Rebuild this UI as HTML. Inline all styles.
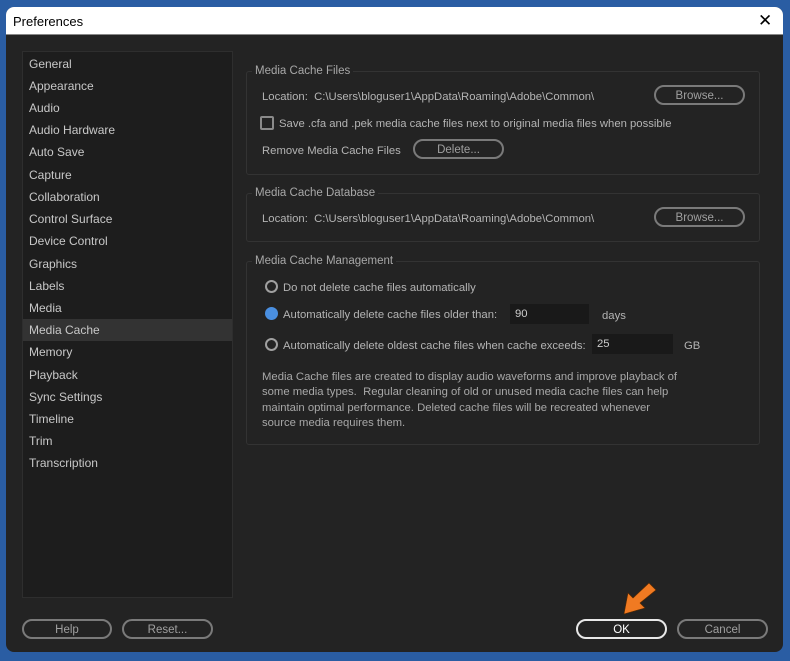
<!DOCTYPE html>
<html><head><meta charset="utf-8"><style>
*{margin:0;padding:0;box-sizing:border-box}
body{width:790px;height:661px;background:#2a5da3;position:relative;overflow:hidden;font-family:"Liberation Sans",sans-serif;font-size:11.3px;color:#b4b4b4}
.a{position:absolute;white-space:nowrap}
.t{margin-top:1.5px}
#win{position:absolute;left:6px;top:7px;width:777px;height:645px;background:#232323;border-radius:8px;overflow:hidden}
#title{position:absolute;left:0;top:0;width:777px;height:28px;background:#fff;border-bottom:1px solid #888;color:#000;font-size:13px;padding:7px 0 0 7px}
#side{position:absolute;left:22px;top:51px;width:211px;height:547px;background:#1d1d1d;border:1px solid #2e2e2e}
.it{position:absolute;left:6px;font-size:12px;color:#c8c8c8}
.sel{position:absolute;left:0;top:267px;width:209px;height:22px;background:#333}
.grp{position:absolute;border:1px solid #333;border-radius:3px}
.gt{position:absolute;background:#232323;padding:0 3px;color:#a8a8a8;font-size:11.5px;margin-top:1px}
.btn{position:absolute;border:2px solid #7a7a7a;border-radius:10px;text-align:center;color:#a0a0a0;font-size:11.5px;line-height:18px}
.inp{position:absolute;background:#191919;color:#ccc;padding-left:5px;line-height:20px;height:20px}
.rad{position:absolute;width:13px;height:13px;border:2px solid #a0a0a0;border-radius:50%}
</style></head><body>
<div id="win">
<div id="title">Preferences</div>
<div class="a" style="left:752px;top:4px;color:#000;font-size:17px">✕</div>
</div>
<div id="side">
<div class="sel"></div>
<div class="it" style="top:5px">General</div>
<div class="it" style="top:27px">Appearance</div>
<div class="it" style="top:49px">Audio</div>
<div class="it" style="top:71px">Audio Hardware</div>
<div class="it" style="top:93px">Auto Save</div>
<div class="it" style="top:116px">Capture</div>
<div class="it" style="top:138px">Collaboration</div>
<div class="it" style="top:160px">Control Surface</div>
<div class="it" style="top:182px">Device Control</div>
<div class="it" style="top:205px">Graphics</div>
<div class="it" style="top:227px">Labels</div>
<div class="it" style="top:249px">Media</div>
<div class="it" style="top:271px">Media Cache</div>
<div class="it" style="top:293px">Memory</div>
<div class="it" style="top:316px">Playback</div>
<div class="it" style="top:338px">Sync Settings</div>
<div class="it" style="top:360px">Timeline</div>
<div class="it" style="top:382px">Trim</div>
<div class="it" style="top:404px">Transcription</div>
</div>

<div class="grp" style="left:246px;top:71px;width:514px;height:104px"></div>
<div class="gt" style="left:252px;top:64px">Media Cache Files</div>
<div class="a t" style="left:262px;top:89px">Location:&nbsp; C:\Users\bloguser1\AppData\Roaming\Adobe\Common\</div>
<div class="btn" style="left:654px;top:85px;width:91px;height:20px">Browse...</div>
<div class="a" style="left:260px;top:116px;width:14px;height:14px;border:2px solid #8a8a8a;border-radius:2px"></div>
<div class="a t" style="left:279px;top:116px">Save .cfa and .pek media cache files next to original media files when possible</div>
<div class="a t" style="left:262px;top:143px">Remove Media Cache Files</div>
<div class="btn" style="left:413px;top:139px;width:91px;height:20px">Delete...</div>

<div class="grp" style="left:246px;top:193px;width:514px;height:49px"></div>
<div class="gt" style="left:252px;top:186px">Media Cache Database</div>
<div class="a t" style="left:262px;top:211px">Location:&nbsp; C:\Users\bloguser1\AppData\Roaming\Adobe\Common\</div>
<div class="btn" style="left:654px;top:207px;width:91px;height:20px">Browse...</div>

<div class="grp" style="left:246px;top:261px;width:514px;height:184px"></div>
<div class="gt" style="left:252px;top:254px">Media Cache Management</div>
<div class="rad" style="left:265px;top:280px"></div>
<div class="a t" style="left:283px;top:280px">Do not delete cache files automatically</div>
<div class="rad" style="left:265px;top:307px;background:#4a8fe0;border-color:#4a8fe0"></div>
<div class="a t" style="left:283px;top:307px">Automatically delete cache files older than:</div>
<div class="inp" style="left:510px;top:304px;width:79px">90</div>
<div class="a t" style="left:602px;top:308px">days</div>
<div class="rad" style="left:265px;top:338px"></div>
<div class="a t" style="left:283px;top:338px">Automatically delete oldest cache files when cache exceeds:</div>
<div class="inp" style="left:592px;top:334px;width:81px">25</div>
<div class="a t" style="left:684px;top:338px">GB</div>
<div class="a" style="left:262px;top:370px;line-height:15.3px;color:#a8a8a8">Media Cache files are created to display audio waveforms and improve playback of<br>some media types.&nbsp; Regular cleaning of old or unused media cache files can help<br>maintain optimal performance. Deleted cache files will be recreated whenever<br>source media requires them.</div>

<div class="btn" style="left:22px;top:619px;width:90px;height:20px">Help</div>
<div class="btn" style="left:122px;top:619px;width:91px;height:20px">Reset...</div>
<div class="btn" style="left:576px;top:619px;width:91px;height:20px;border-color:#e8e8e8;color:#fff">OK</div>
<div class="btn" style="left:677px;top:619px;width:91px;height:20px">Cancel</div>
<svg class="a" style="left:618px;top:580px" width="40" height="38" viewBox="0 0 40 38"><path d="M31 3 L38 10 L22 23 L27 28 L6 34 L10 13 L15 18 Z" fill="#f07a22" stroke="#5a2a00" stroke-width="0.6" stroke-linejoin="round"/></svg>
</body></html>
